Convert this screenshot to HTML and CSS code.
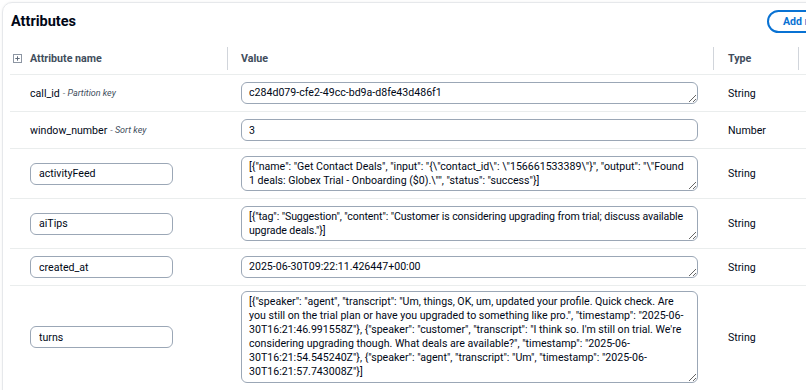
FILE: index.html
```html
<!DOCTYPE html>
<html lang="en">
<head>
<meta charset="utf-8">
<title>Attributes</title>
<link rel="stylesheet" href="styles.css">
</head>
<body>
<div class="card">
  <div class="card-header">
    <h2 class="title">Attributes</h2>
    <button class="btn-add" type="button">Add new attribute</button>
  </div>
  <div class="table">
    <div class="row head">
      <div class="cell c-name">
        <span class="expand"><svg width="9" height="9" viewBox="0 0 9 9"><rect x="0.5" y="0.5" width="8" height="8" fill="none" stroke="#8d96a3"/><path d="M4.5 2.3v4.4M2.3 4.5h4.4" stroke="#5f6b7a" stroke-width="1"/></svg></span>
        <span>Attribute name</span>
      </div>
      <div class="cell c-val sep">Value</div>
      <div class="cell c-type sep">Type</div>
      <div class="cell c-act sep"></div>
    </div>

    <div class="row">
      <div class="cell c-name"><span>call_id</span><span class="key">- Partition key</span></div>
      <div class="cell c-val"><textarea class="field h1" rows="1">c284d079-cfe2-49cc-bd9a-d8fe43d486f1</textarea></div>
      <div class="cell c-type">String</div>
      <div class="cell c-act"></div>
    </div>

    <div class="row">
      <div class="cell c-name"><span>window_number</span><span class="key">- Sort key</span></div>
      <div class="cell c-val"><input class="field input-val" type="text" value="3"></div>
      <div class="cell c-type">Number</div>
      <div class="cell c-act"></div>
    </div>

    <div class="row">
      <div class="cell c-name"><input class="name-input" type="text" value="activityFeed"></div>
      <div class="cell c-val"><textarea class="field h2" rows="2">[{"name": "Get Contact Deals", "input": "{\"contact_id\": \"156661533389\"}", "output": "\"Found
1 deals: Globex Trial - Onboarding ($0).\"", "status": "success"}]</textarea></div>
      <div class="cell c-type">String</div>
      <div class="cell c-act"></div>
    </div>

    <div class="row">
      <div class="cell c-name"><input class="name-input" type="text" value="aiTips"></div>
      <div class="cell c-val"><textarea class="field h2 tight" rows="2">[{"tag": "Suggestion", "content": "Customer is considering upgrading from trial; discuss available
upgrade deals."}]</textarea></div>
      <div class="cell c-type">String</div>
      <div class="cell c-act"></div>
    </div>

    <div class="row">
      <div class="cell c-name"><input class="name-input" type="text" value="created_at"></div>
      <div class="cell c-val"><textarea class="field h1" rows="1">2025-06-30T09:22:11.426447+00:00</textarea></div>
      <div class="cell c-type">String</div>
      <div class="cell c-act"></div>
    </div>

    <div class="row last">
      <div class="cell c-name"><input class="name-input" type="text" value="turns"></div>
      <div class="cell c-val"><textarea class="field h6" rows="6">[{"speaker": "agent", "transcript": "Um, things, OK, um, updated your profile. Quick check. Are
you still on the trial plan or have you upgraded to something like pro.", "timestamp": "2025-06-
30T16:21:46.991558Z"}, {"speaker": "customer", "transcript": "I think so. I'm still on trial. We're
considering upgrading though. What deals are available?", "timestamp": "2025-06-
30T16:21:54.545240Z"}, {"speaker": "agent", "transcript": "Um", "timestamp": "2025-06-
30T16:21:57.743008Z"}]</textarea></div>
      <div class="cell c-type">String</div>
      <div class="cell c-act"></div>
    </div>
  </div>
</div>
</body>
</html>
```

FILE: styles.css
```css
html, body {
  margin: 0;
  padding: 0;
  background: #ffffff;
  overflow: hidden;
}
body {
  font-family: Roboto, "Liberation Sans", sans-serif;
  font-size: 10.6px;
  color: #000716;
  width: 806px;
  height: 390px;
}
.card {
  margin: 2px 0 0 2px;
  width: 860px;
  height: 420px;
  border: 1px solid #e6e8eb;
  border-radius: 10px;
  padding: 0 0 0 7px;
  box-sizing: border-box;
  box-shadow: 0 0 3px rgba(0, 7, 22, 0.06);
}
.card-header {
  height: 37px;
  display: flex;
  align-items: center;
  width: 827px;
}
.title {
  margin: 0 0 0 1px;
  font-size: 14.5px;
  font-weight: 700;
  line-height: 18px;
}
.btn-add {
  margin-left: auto;
  height: 23px;
  width: 70px;
  flex: none;
  padding: 0 0 0 14px;
  border: 2px solid #0972d3;
  border-radius: 14px;
  background: #fff;
  color: #0972d3;
  font-family: inherit;
  font-size: 10.6px;
  font-weight: 700;
  white-space: nowrap;
  overflow: hidden;
  text-align: left;
}
.table {
  margin-top: 3px;
}
.row {
  display: grid;
  grid-template-columns: 217px 486px 85px 60px;
  align-items: center;
  border-bottom: 1px solid #eaeded;
  padding: 7px 0;
}
.row.last {
  padding-top: 5px;
}
.row.head {
  padding: 0;
  height: 32px;
  box-sizing: border-box;
  font-weight: 700;
  font-size: 10.7px;
  color: #414d5c;
}
.cell {
  display: flex;
  align-items: center;
}
.head .cell {
  height: 23px;
}
.head .c-name {
  padding-left: 3px;
  gap: 8px;
}
.expand {
  display: flex;
  width: 9px;
  height: 9px;
}
.sep {
  border-left: 1px solid #d1d5db;
}
.head .c-val { padding-left: 13px; }
.head .c-type { padding-left: 14px; }
.c-name { padding-left: 20px; }
.c-val { padding-left: 14px; }
.c-type { padding-left: 15px; }
.key {
  font-style: italic;
  font-size: 9px;
  color: #414d5c;
  margin-left: 3px;
}
.field {
  display: block;
  box-sizing: border-box;
  width: 457px;
  margin: 0;
  border: 1px solid #9ba7b6;
  border-radius: 6px;
  padding: 3px 2px 3px 7px;
  font-family: inherit;
  font-size: 10.6px;
  line-height: 14px;
  color: #000716;
  background: #fff;
  resize: vertical;
  overflow: hidden;
  white-space: pre-wrap;
}
.field.tight {
  letter-spacing: -0.1px;
}
textarea.field.h1 { height: 22px; }
input.field.input-val { height: 22px; }
textarea.field.h2 { height: 35px; }
textarea.field.h6 { height: 92px; }
.name-input {
  box-sizing: border-box;
  width: 143px;
  height: 22px;
  margin: 0;
  border: 1px solid #9ba7b6;
  border-radius: 6px;
  padding: 0 8px;
  font-family: inherit;
  font-size: 10.6px;
  color: #000716;
  background: #fff;
}
```
